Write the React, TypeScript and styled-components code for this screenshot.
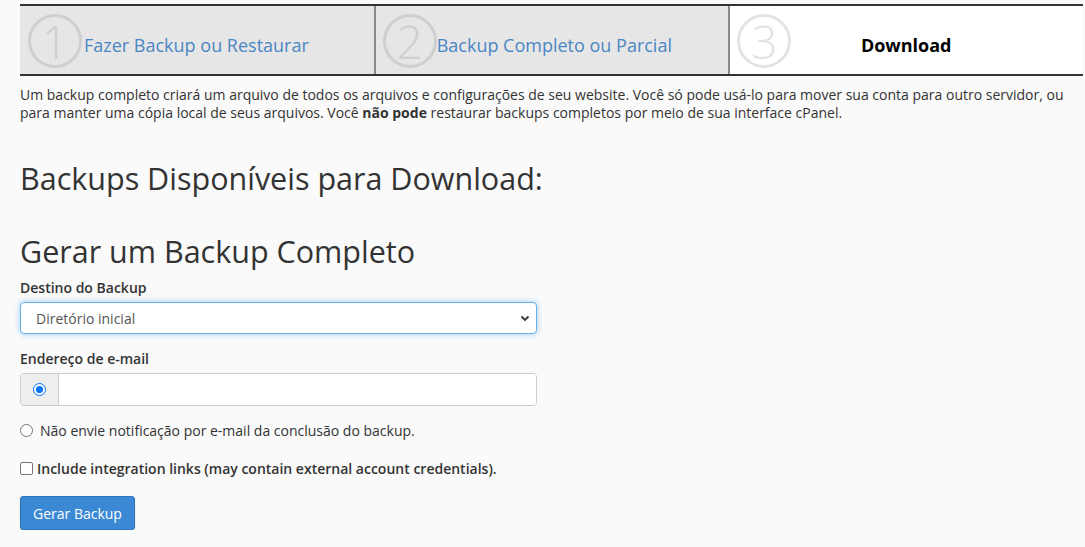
import React from "react";
import styled, { createGlobalStyle } from "styled-components";

const GlobalStyle = createGlobalStyle`
  html, body {
    margin: 0;
    padding: 0;
    background: #fafafa;
    font-family: "Open Sans", "Liberation Sans", sans-serif;
    color: #333;
  }
`;

const Page = styled.div`
  padding: 4px 2px 0 20px;
`;

const Steps = styled.div`
  display: flex;
  border-top: 2px solid #333;
  border-bottom: 2px solid #333;
  height: 68px;
`;

const Step = styled.div<{ active?: boolean }>`
  flex: 1;
  display: flex;
  align-items: center;
  gap: 2px;
  padding-left: 8px;
  background: ${(p) => (p.active ? "#fff" : "#e6e6e6")};
  & + & {
    border-left: 2px solid #8a8a8a;
    gap: 0;
    padding-left: 7px;
  }
`;

const StepNumber = styled.div<{ active?: boolean }>`
  flex: none;
  width: 48px;
  height: 48px;
  border: 3px solid ${(p) => (p.active ? "#e3e3e3" : "#cfcfcf")};
  border-radius: 50%;
  display: flex;
  align-items: center;
  justify-content: center;
  font-size: 46px;
  font-weight: 300;
  line-height: 1;
  color: ${(p) => (p.active ? "#e3e3e3" : "#cfcfcf")};
  margin-top: 2px;
`;

const StepLink = styled.a`
  font-size: 18px;
  color: #4a86c4;
  text-decoration: none;
  margin-top: 10px;
`;

const StepCurrent = styled.span`
  flex: 1;
  text-align: center;
  font-size: 18px;
  font-weight: 700;
  color: #000;
  margin-top: 10px;
  padding-right: 62px;
`;

const Description = styled.p`
  font-size: 14px;
  line-height: 18px;
  margin: 10px 0 0;
  max-width: 1064px;
`;

const Heading = styled.h2<{ top: number }>`
  font-size: 30.5px;
  font-weight: 400;
  margin: ${(p) => p.top}px 0 0;
  line-height: 40px;
  color: #333;
`;

const Field = styled.div<{ top: number }>`
  margin-top: ${(p) => p.top}px;
  width: 517px;
`;

const Label = styled.label`
  display: block;
  font-size: 14px;
  font-weight: 600;
  margin-bottom: 5px;
`;

const Select = styled.div`
  height: 32px;
  box-sizing: border-box;
  border: 1px solid #66afe9;
  border-radius: 4px;
  background: #fff;
  box-shadow: 0 0 6px rgba(102, 175, 233, 0.6);
  display: flex;
  align-items: center;
  justify-content: space-between;
  padding: 0 6px 0 15px;
  font-size: 14px;
  color: #555;
`;

const InputGroup = styled.div`
  display: flex;
  height: 33px;
  box-sizing: border-box;
  border: 1px solid #ccc;
  border-radius: 4px;
  background: #fff;
  overflow: hidden;
`;

const Addon = styled.div`
  width: 37px;
  background: #eee;
  border-right: 1px solid #ccc;
  display: flex;
  align-items: center;
  justify-content: center;
`;

const TextInput = styled.input`
  flex: 1;
  border: none;
  outline: none;
  padding: 0 12px;
  font-family: inherit;
  font-size: 14px;
`;

const Radio = styled.span<{ checked?: boolean }>`
  flex: none;
  width: 13px;
  height: 13px;
  box-sizing: border-box;
  border-radius: 50%;
  border: 1px solid ${(p) => (p.checked ? "#0075ff" : "#767676")};
  background: #fff;
  display: flex;
  align-items: center;
  justify-content: center;
  &::after {
    content: "";
    display: ${(p) => (p.checked ? "block" : "none")};
    width: 7px;
    height: 7px;
    border-radius: 50%;
    background: #0075ff;
  }
`;

const Checkbox = styled.span`
  flex: none;
  width: 13px;
  height: 13px;
  box-sizing: border-box;
  border: 1px solid #767676;
  border-radius: 2px;
  background: #fff;
`;

const OptionRow = styled.div<{ top: number; bold?: boolean; gap: number }>`
  display: flex;
  align-items: center;
  gap: ${(p) => p.gap}px;
  margin-top: ${(p) => p.top}px;
  font-size: 14px;
  font-weight: ${(p) => (p.bold ? 600 : 400)};
`;

const Button = styled.button`
  margin-top: 18px;
  height: 34px;
  padding: 0 12px;
  font-family: inherit;
  font-size: 14px;
  color: #fff;
  background: #3b88d4;
  border: 1px solid #2f74b8;
  border-radius: 3px;
  box-shadow: 0 1px 2px rgba(0, 0, 0, 0.15);
`;

const Chevron = () => (
  <svg width="10" height="10" viewBox="0 0 10 10">
    <path d="M1.5 3.5 L5 7 L8.5 3.5" fill="none" stroke="#333" strokeWidth="1.8" />
  </svg>
);

export default function App() {
  return (
    <Page>
      <GlobalStyle />
      <Steps>
        <Step>
          <StepNumber>1</StepNumber>
          <StepLink href="#">Fazer Backup ou Restaurar</StepLink>
        </Step>
        <Step>
          <StepNumber>2</StepNumber>
          <StepLink href="#">Backup Completo ou Parcial</StepLink>
        </Step>
        <Step active>
          <StepNumber active>3</StepNumber>
          <StepCurrent>Download</StepCurrent>
        </Step>
      </Steps>
      <Description>
        Um backup completo criará um arquivo de todos os arquivos e configurações de seu website.
        Você só pode usá-lo para mover sua conta para outro servidor, ou para manter uma cópia
        local de seus arquivos. Você <strong>não pode</strong> restaurar backups completos por meio
        de sua interface cPanel.
      </Description>
      <Heading top={36}>Backups Disponíveis para Download:</Heading>
      <Heading top={33}>Gerar um Backup Completo</Heading>
      <Field top={7}>
        <Label>Destino do Backup</Label>
        <Select>
          <span>Diretório inicial</span>
          <Chevron />
        </Select>
      </Field>
      <Field top={15}>
        <Label>Endereço de e-mail</Label>
        <InputGroup>
          <Addon>
            <Radio checked />
          </Addon>
          <TextInput />
        </InputGroup>
      </Field>
      <OptionRow top={15} gap={7}>
        <Radio />
        <span>Não envie notificação por e-mail da conclusão do backup.</span>
      </OptionRow>
      <OptionRow top={19} bold gap={4}>
        <Checkbox />
        <span>Include integration links (may contain external account credentials).</span>
      </OptionRow>
      <Button>Gerar Backup</Button>
    </Page>
  );
}
